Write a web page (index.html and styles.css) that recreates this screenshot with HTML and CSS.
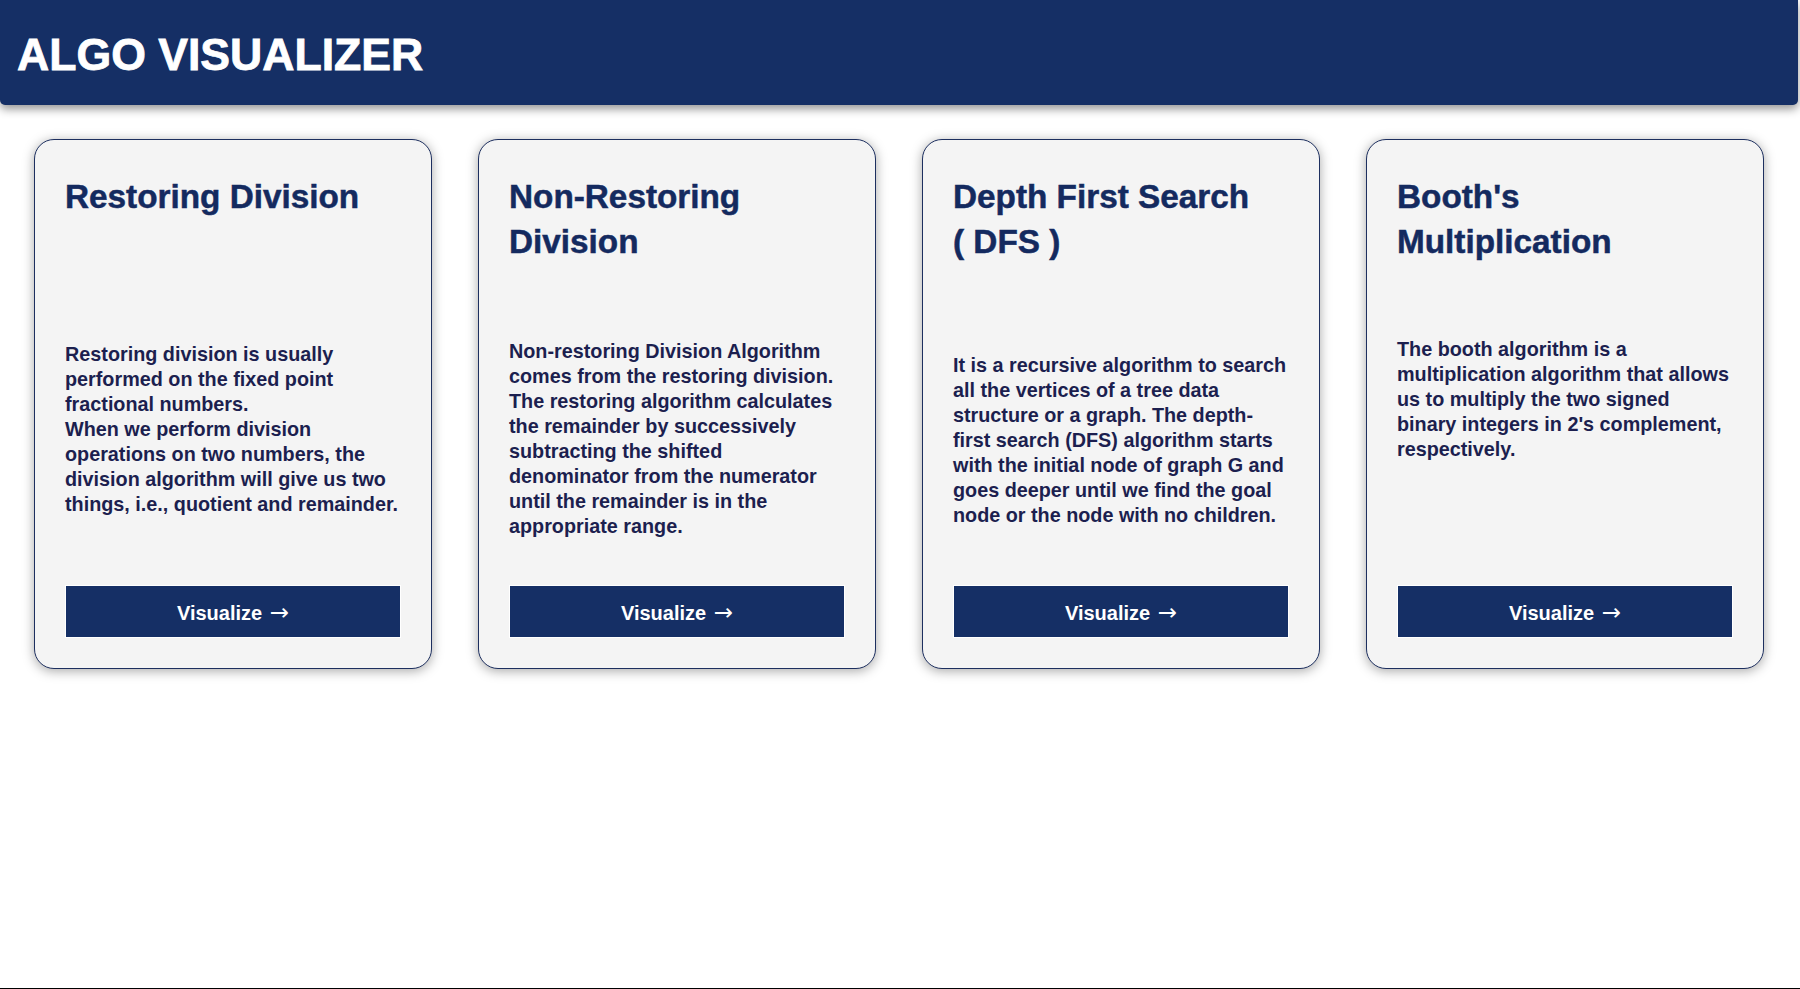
FILE: index.html
```html
<!DOCTYPE html>
<html lang="en">
<head>
<meta charset="utf-8">
<title>Algo Visualizer</title>
<link rel="stylesheet" href="styles.css">
</head>
<body>
<header class="topbar">
  <h1 class="brand">ALGO VISUALIZER</h1>
</header>
<main class="cards">
  <article class="card">
    <h2 class="card-title">Restoring Division</h2>
    <p class="card-text card-text--first">Restoring division is usually performed on the fixed point fractional numbers.<br>When we perform division operations on two numbers, the division algorithm will give us two things, i.e., quotient and remainder.</p>
    <button class="card-btn">Visualize <span class="arrow">→</span></button>
  </article>
  <article class="card">
    <h2 class="card-title">Non-Restoring Division</h2>
    <p class="card-text">Non-restoring Division Algorithm comes from the restoring division. The restoring algorithm calculates the remainder by successively subtracting the shifted denominator from the numerator until the remainder is in the appropriate range.</p>
    <button class="card-btn">Visualize <span class="arrow">→</span></button>
  </article>
  <article class="card">
    <h2 class="card-title">Depth First Search<br>( DFS )</h2>
    <p class="card-text card-text--low">It is a recursive algorithm to search all the vertices of a tree data structure or a graph. The depth-first search (DFS) algorithm starts with the initial node of graph G and goes deeper until we find the goal node or the node with no children.</p>
    <button class="card-btn">Visualize <span class="arrow">→</span></button>
  </article>
  <article class="card">
    <h2 class="card-title">Booth's Multiplication</h2>
    <p class="card-text card-text--high">The booth algorithm is a multiplication algorithm that allows us to multiply the two signed binary integers in 2's complement, respectively.</p>
    <button class="card-btn">Visualize <span class="arrow">→</span></button>
  </article>
</main>
<footer class="page-foot"></footer>
</body>
</html>
```
FILE: styles.css
```css
* { box-sizing: border-box; }

html, body { margin: 0; padding: 0; }

body {
  background: #ffffff;
  font-family: "Liberation Sans", Arial, sans-serif;
  min-height: 100vh;
  display: flex;
  flex-direction: column;
}

.topbar {
  height: 105px;
  margin-right: 2px;
  background: #152f65;
  border-radius: 0 0 5px 5px;
  box-shadow: 0 4px 10px rgba(0, 0, 0, 0.42);
  padding: 33px 17px 0;
}

.brand {
  margin: 0;
  color: #ffffff;
  font-size: 44.6px;
  line-height: 1;
  font-weight: 700;
  -webkit-text-stroke: 0.8px #ffffff;
}

.cards {
  flex: 1;
  display: grid;
  grid-template-columns: repeat(4, 398px);
  column-gap: 46px;
  padding: 34px 0 0 34px;
  align-content: start;
}

.card {
  height: 530px;
  background: #f4f4f4;
  border: 1px solid #1d2f5f;
  border-radius: 20px;
  box-shadow: 0 2px 12px rgba(0, 0, 0, 0.35);
  padding: 30px;
  display: flex;
  flex-direction: column;
}

.card-title {
  margin: 4px 0 0;
  min-height: 90px;
  color: #142a5f;
  font-size: 33.3px;
  line-height: 45px;
  font-weight: 700;
  -webkit-text-stroke: 0.5px #142a5f;
}

.card-text {
  margin: 75px 0 0;
  color: #1c1f4f;
  font-size: 19.8px;
  line-height: 25px;
  font-weight: 700;
}

.card-text--first { margin-top: 78px; }
.card-text--low { margin-top: 89px; }
.card-text--high { margin-top: 73px; }

.card-btn {
  margin-top: auto;
  height: 53px;
  width: 336px;
  background: #152f65;
  color: #ffffff;
  border: 1px solid #ffffff;
  font-family: "Liberation Sans", Arial, sans-serif;
  font-size: 20px;
  font-weight: 700;
  cursor: pointer;
}

.arrow {
  margin-left: 2px;
  font-family: "DejaVu Sans", sans-serif;
  font-size: 23px;
  font-weight: 400;
}

.page-foot {
  height: 1px;
  background: #000000;
}
```
